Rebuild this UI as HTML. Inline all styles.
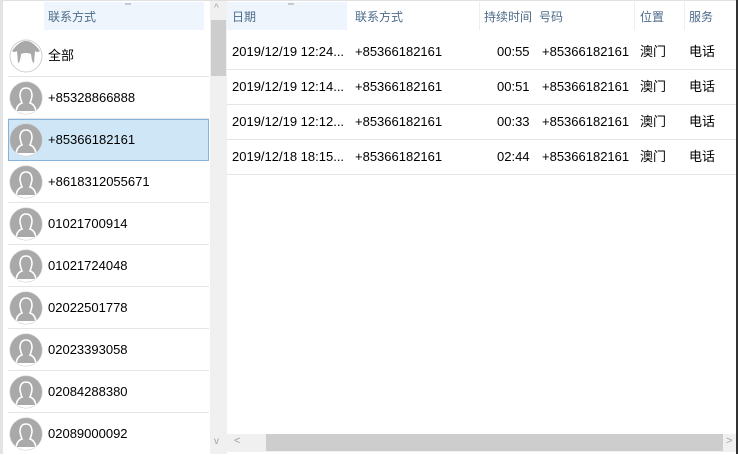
<!DOCTYPE html>
<html><head><meta charset="utf-8"><style>
*{margin:0;padding:0;box-sizing:border-box}
body{width:738px;height:454px;background:#fff;position:relative;overflow:hidden;font-family:"Liberation Sans","Noto Sans CJK SC",sans-serif;font-size:13px;color:#000}
.a{position:absolute}
.hd{color:#4d6b8a;font-size:12px;line-height:34px;top:0}
.row{position:absolute;left:8px;width:201px;height:42px;border-bottom:1px solid #e5e5e5}
.row svg{position:absolute;left:1px;top:4px}
.row span{position:absolute;left:40px;top:0;line-height:42px}
.rr{position:absolute;left:227px;width:509px;height:35px;border-bottom:1px solid #e5e5e5}
.rr span{position:absolute;top:0;line-height:34px}
</style></head><body>
<div class="a" style="left:0;top:0;width:3px;height:454px;background:#e3e3e3"></div>
<div class="a" style="left:0;top:0;width:738px;height:1px;background:#e0e0e0"></div>
<div class="a" style="left:44px;top:2px;width:160px;height:28px;background:#eef5fc"></div>
<div class="a hd" style="left:48px">联系方式</div>
<div class="a" style="left:125px;top:3px;width:6px;height:2px;background:#c8c8c8"></div>

<svg width="0" height="0" style="position:absolute"><defs>
<clipPath id="c"><circle cx="17" cy="17" r="16"/></clipPath>
<g id="av"><circle cx="17" cy="17" r="16" fill="#fff" stroke="#cfcfcf"/><g clip-path="url(#c)"><circle cx="17" cy="17" r="16" fill="#a9a9a9"/><path d="M7 33 Q7 24 13 22 Q12 20 11 15 Q11 7 17 7 Q23 7 23 15 Q22 20 21 22 Q27 24 27 33" fill="none" stroke="#fff" stroke-width="1.6"/><rect x="0" y="30" width="34" height="4" fill="#fff"/></g></g>
</defs></svg>

<div class="row" style="top:35px"><svg width="34" height="34"><circle cx="17" cy="17" r="16" fill="#fff" stroke="#cfcfcf"/><path d="M3 12 Q10 2 17 2 Q24 2 31 12 Q28 14 26 12 L25 24 Q23 24 22 15 Q20 14 17 14 Q14 14 12 15 Q11 24 9 24 L8 12 Q6 14 3 12Z" fill="#a9a9a9"/></svg><span>全部</span></div>
<div class="row" style="top:77px"><svg width="34" height="34"><use href="#av"/></svg><span>+85328866888</span></div>
<div class="row" style="top:119px;background:#cfe6f6;border:1px solid #84b4dc;height:42px"><svg width="34" height="34" style="left:0;top:3px"><use href="#av"/></svg><span style="left:39px;line-height:40px">+85366182161</span></div>
<div class="row" style="top:161px"><svg width="34" height="34"><use href="#av"/></svg><span>+8618312055671</span></div>
<div class="row" style="top:203px"><svg width="34" height="34"><use href="#av"/></svg><span>01021700914</span></div>
<div class="row" style="top:245px"><svg width="34" height="34"><use href="#av"/></svg><span>01021724048</span></div>
<div class="row" style="top:287px"><svg width="34" height="34"><use href="#av"/></svg><span>02022501778</span></div>
<div class="row" style="top:329px"><svg width="34" height="34"><use href="#av"/></svg><span>02023393058</span></div>
<div class="row" style="top:371px"><svg width="34" height="34"><use href="#av"/></svg><span>02084288380</span></div>
<div class="row" style="top:413px;border:none"><svg width="34" height="34"><use href="#av"/></svg><span>02089000092</span></div>

<div class="a" style="left:210px;top:1px;width:17px;height:453px;background:#f0f0f0"></div>
<div class="a" style="left:211px;top:20px;width:15px;height:56px;background:#cdcdcd"></div>
<div class="a" style="left:214px;top:3px;font-size:10px;color:#a0a0a0">^</div>
<div class="a" style="left:214px;top:436px;font-size:10px;color:#a0a0a0">v</div>

<div class="a" style="left:227px;top:2px;width:120px;height:28px;background:#eef5fc"></div>
<div class="a" style="left:288px;top:3px;width:6px;height:2px;background:#c8c8c8"></div>
<div class="a hd" style="left:232px">日期</div>
<div class="a hd" style="left:355px">联系方式</div>
<div class="a hd" style="left:484px">持续时间</div>
<div class="a hd" style="left:539px">号码</div>
<div class="a hd" style="left:640px">位置</div>
<div class="a hd" style="left:689px">服务</div>
<div class="a" style="left:479px;top:2px;width:1px;height:28px;background:#eee"></div>
<div class="a" style="left:634px;top:2px;width:1px;height:28px;background:#eee"></div>
<div class="a" style="left:684px;top:2px;width:1px;height:28px;background:#eee"></div>

<div class="rr" style="top:35px"><span style="left:5px">2019/12/19 12:24...</span><span style="left:128px">+85366182161</span><span style="left:270px">00:55</span><span style="left:315px">+85366182161</span><span style="left:413px">澳门</span><span style="left:462px">电话</span></div>
<div class="rr" style="top:70px"><span style="left:5px">2019/12/19 12:14...</span><span style="left:128px">+85366182161</span><span style="left:270px">00:51</span><span style="left:315px">+85366182161</span><span style="left:413px">澳门</span><span style="left:462px">电话</span></div>
<div class="rr" style="top:105px"><span style="left:5px">2019/12/19 12:12...</span><span style="left:128px">+85366182161</span><span style="left:270px">00:33</span><span style="left:315px">+85366182161</span><span style="left:413px">澳门</span><span style="left:462px">电话</span></div>
<div class="rr" style="top:140px"><span style="left:5px">2019/12/18 18:15...</span><span style="left:128px">+85366182161</span><span style="left:270px">02:44</span><span style="left:315px">+85366182161</span><span style="left:413px">澳门</span><span style="left:462px">电话</span></div>

<div class="a" style="left:227px;top:434px;width:510px;height:18px;background:#f0f0f0"></div>
<div class="a" style="left:266px;top:434px;width:457px;height:17px;background:#cdcdcd"></div>
<div class="a" style="left:234px;top:435px;font-size:11px;color:#a0a0a0">&lt;</div>
<div class="a" style="left:726px;top:435px;font-size:11px;color:#a0a0a0">&gt;</div>
<div class="a" style="left:736px;top:0;width:2px;height:454px;background:#333"></div>
</body></html>
